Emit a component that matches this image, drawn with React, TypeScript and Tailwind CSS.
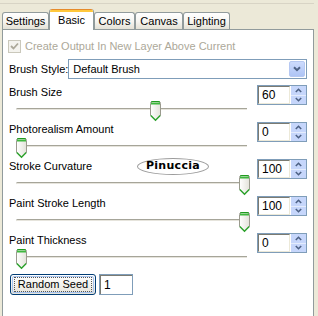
import React from "react";

const tabs = [
  { label: "Settings", w: "w-[47px]" },
  { label: "Basic", w: "w-[45px]", active: true },
  { label: "Colors", w: "w-[41px]" },
  { label: "Canvas", w: "w-[48px]" },
  { label: "Lighting", w: "w-[47px]" },
];

const sliders = [
  { label: "Brush Size", value: 60 },
  { label: "Photorealism Amount", value: 0 },
  { label: "Stroke Curvature", value: 100, mark: true },
  { label: "Paint Stroke Length", value: 100 },
  { label: "Paint Thickness", value: 0 },
];

function Thumb() {
  return (
    <svg width="11" height="21" viewBox="0 0 11 21">
      <defs>
        <linearGradient id="tb" x1="0" x2="1" y1="0" y2="0">
          <stop offset="0" stopColor="#ffffff" />
          <stop offset="1" stopColor="#e3e2da" />
        </linearGradient>
      </defs>
      <path d="M0.5 2.5 Q0.5 0.5 2.5 0.5 H8.5 Q10.5 0.5 10.5 2.5 V14.5 L5.5 19.5 L0.5 14.5 Z" fill="url(#tb)" stroke="#9a9a8e" />
      <path d="M1 1.5 H10 V3.5 H1 Z" fill="#3fb73f" />
      <path d="M1 1 Q1.5 0.5 3 0.5 H8 Q9.5 0.5 10 1" stroke="#1f9a1f" fill="none" />
      <polyline points="0.8,14.5 5.5,19.3 10.2,14.5" fill="none" stroke="#2ba22b" strokeWidth="1.4" />
    </svg>
  );
}

function Spinner({ value }: { value: string }) {
  return (
    <div className="flex w-[50px] h-[20px] border border-[#7f9db9] bg-white">
      <div className="flex-1 border-t border-l border-[#7b7b72] border-r border-r-[#ece9d8] border-b border-b-[#ece9d8] pl-[3px] leading-[17px] text-[12px]">
        {value}
      </div>
      <div className="w-[15px] flex flex-col ml-px bg-[#c6d6fb]">
        <div className="flex-1 flex items-center justify-center border-b border-[#e4ecfd]">
          <svg width="7" height="5" viewBox="0 0 7 5">
            <polyline points="0.8,4 3.5,1.3 6.2,4" fill="none" stroke="#4d6185" strokeWidth="1.6" />
          </svg>
        </div>
        <div className="flex-1 flex items-center justify-center">
          <svg width="7" height="5" viewBox="0 0 7 5">
            <polyline points="0.8,1 3.5,3.7 6.2,1" fill="none" stroke="#4d6185" strokeWidth="1.6" />
          </svg>
        </div>
      </div>
    </div>
  );
}

export default function App() {
  return (
    <div className="w-[318px] h-[316px] overflow-hidden bg-[#ece9d8] text-[11px] text-black font-['Liberation_Sans',Arial,sans-serif] whitespace-nowrap">
      <div className="h-[3px]" />
      <div className="h-px w-[314px] bg-[#d8d4c5]" />
      <div className="h-[25px] flex items-end pl-[2px]">
        {tabs.map((t) =>
          t.active ? (
            <div
              key={t.label}
              className={`${t.w} h-[21px] -mb-px relative z-10 bg-white border-x border-[#919b9c] rounded-t-[3px] overflow-hidden flex flex-col`}
            >
              <div className="h-px bg-[#e68b2c]" />
              <div className="h-[2px] bg-[#ffc83c]" />
              <div className="flex-1 flex items-center justify-center pb-[2px]">{t.label}</div>
            </div>
          ) : (
            <div
              key={t.label}
              className={`${t.w} h-[17px] border-t border-x border-[#919b9c] rounded-t-[3px] bg-linear-to-b from-white via-[#f7f6f2] to-[#e4e1d6] flex items-center justify-center pt-px`}
            >
              {t.label}
            </div>
          )
        )}
      </div>
      <div className="ml-[2px] w-[312px] h-[290px] bg-white border border-[#919b9c] px-[6px] pt-[10px]">
        <div className="flex items-center h-[13px] -ml-px gap-[4px] text-[#aca899]">
          <div className="w-[13px] h-[13px] border border-[#cac8bb] bg-[#f4f3ee] flex items-center justify-center">
            <svg width="9" height="9" viewBox="0 0 9 9">
              <polyline points="1,4 3.5,6.5 8,1.5" fill="none" stroke="#aca899" strokeWidth="1.8" />
            </svg>
          </div>
          <span>Create Output In New Layer Above Current</span>
        </div>
        <div className="flex items-center justify-between h-[20px] mt-[6px]">
          <span className="shrink-0">Brush Style:</span>
          <div className="w-[240px] h-[20px] border border-[#7f9db9] flex items-center pl-[4px] pr-px">
            <span className="flex-1">Default Brush</span>
            <div className="w-[16px] h-[16px] rounded-[2px] border border-[#b6c8f2] bg-linear-to-b from-[#cddbfd] to-[#aec4f5] flex items-center justify-center">
              <svg width="8" height="6" viewBox="0 0 8 6">
                <polyline points="1,1.2 4,4.2 7,1.2" fill="none" stroke="#4d6185" strokeWidth="2" />
              </svg>
            </div>
          </div>
        </div>
        <div className="mt-[6px] flex flex-col">
          {sliders.map((s) => (
            <div key={s.label} className="relative flex h-[37px]">
              <div className="flex-1 flex flex-col">
                <div className="h-[14px] leading-[14px]">{s.label}</div>
                <div className="relative h-[23px] ml-[7px] w-[231px]">
                  <div className="absolute left-0 right-0 top-[9px] h-[3px] rounded-l-[2px] border-t border-[#a6a599] bg-[#e6e4dc] border-b border-b-white" />
                  <div className="absolute top-[2px]" style={{ left: Math.round((223 * s.value) / 100) }}>
                    <Thumb />
                  </div>
                </div>
              </div>
              <Spinner value={String(s.value)} />
              {s.mark && (
                <div className="absolute left-[128px] -top-px w-[72px] h-[17px] rounded-[50%] border border-[#9c9c9c] bg-white flex items-center justify-center font-['DejaVu_Sans',sans-serif] font-bold text-[11px] tracking-[0.3px]">
                  Pinuccia
                </div>
              )}
            </div>
          ))}
        </div>
        <div className="flex items-center mt-[4px] ml-px gap-[3px]">
          <div className="w-[86px] h-[21px] rounded-[3px] border border-[#003c74] bg-linear-to-b from-white to-[#e6e4da] p-px">
            <div className="w-full h-full rounded-[2px] border border-[#a8c4ef] flex items-center justify-center">
              <span className="border border-dotted border-[#555] px-[3px] leading-[13px]">Random Seed</span>
            </div>
          </div>
          <div className="w-[34px] h-[21px] border border-[#7f9db9]">
            <div className="w-full h-full border-t border-l border-[#7b7b72] pl-[3px] leading-[18px] text-[12px]">1</div>
          </div>
        </div>
      </div>
    </div>
  );
}
